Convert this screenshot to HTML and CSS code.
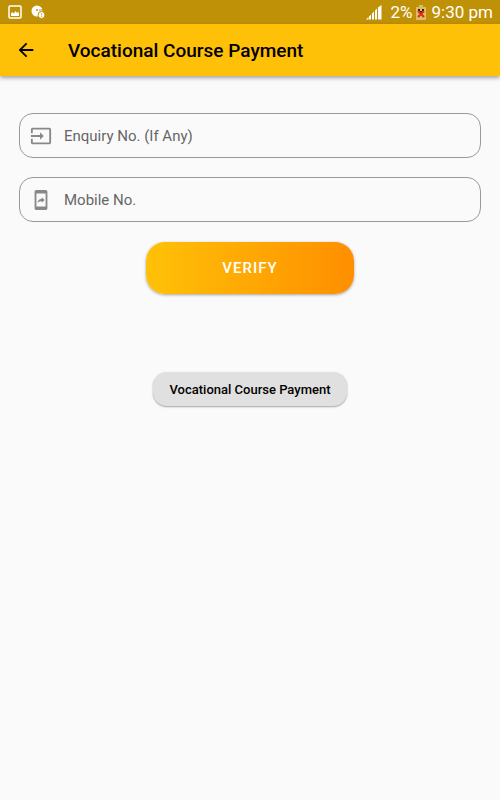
FILE: index.html
```html
<!DOCTYPE html>
<html lang="en">
<head>
    <meta charset="UTF-8">
    <meta name="viewport" content="width=device-width, initial-scale=1.0">
    <title>Vocational Course Payment</title>
    <link rel="stylesheet" href="styles.css">
</head>
<body>
    <div class="status-bar">
        <div class="status-left">
            <svg width="14" height="14" viewBox="0 0 14 14" aria-hidden="true">
                <rect x="1" y="1" width="12" height="12" rx="1" fill="none" stroke="#fff" stroke-width="1.5"/>
                <path d="M3 11V8.500l1.500-1.500 1.500 1.500L7.500 6l1.500 2 1-1.500L11 8.500V11z" fill="#fff"/>
            </svg>
            <svg width="14" height="14" viewBox="0 0 14 14" aria-hidden="true">
                <circle cx="6" cy="6" r="5.5" fill="#fff"/>
                <path d="M8 5h4" stroke="#bf9106" stroke-width="1"/>
                <circle cx="6" cy="5" r="1" fill="#bf9106"/>
                <circle cx="10.5" cy="10" r="3.5" fill="#fff" stroke="#bf9106" stroke-width="1"/>
                <path d="M10.5 8v2.5M10.5 11v1" stroke="#d9bd68" stroke-width="1"/>
            </svg>
        </div>
        <div class="status-right">
            <svg class="signal" width="16" height="16" viewBox="0 0 16 16" aria-hidden="true">
                <path d="M0 15.500L2.500 13v2.500zM3 15.500v-3l2-2v5zM6 15.500v-6l2-2v8zM9 15.500v-9l2-2v11zM12 15.500v-12L15.500 1v14.500z" fill="#fff"/>
            </svg>
            <span>2%</span>
            <svg class="battery" width="10" height="16" viewBox="0 0 10 16" aria-hidden="true">
                <path d="M3 1h4v2h3v13H0V3h3z" fill="#d9bd68"/>
                <path d="M2 5h2v2H2zM6 5h2v2H6zM4 7h2v2H4z" fill="#2a1a08"/>
                <path d="M2 7l6 6M8 7l-6 6" stroke="#e02a10" stroke-width="2"/>
            </svg>
            <span>9:30 pm</span>
        </div>
    </div>

    <header class="app-bar">
        <button class="back" type="button" aria-label="Back">
            <svg width="22" height="22" viewBox="0 0 24 24" aria-hidden="true">
                <path d="M20 11H7.83l5.59-5.59L12 4l-8 8 8 8 1.41-1.41L7.83 13H20v-2z"/>
            </svg>
        </button>
        <h1>Vocational Course Payment</h1>
    </header>

    <main>
        <form class="verify-form">
            <div class="field">
                <label for="enquiry" aria-label="Enquiry No.">
                    <svg width="22" height="22" viewBox="0 0 24 24" aria-hidden="true">
                        <path d="M21 3.01H3c-1.1 0-2 .9-2 2V9h2V4.99h18v14.03H3V15H1v4.01c0 1.1.9 1.98 2 1.98h18c1.1 0 2-.88 2-1.98v-14c0-1.11-.9-2-2-2zM11 16l4-4-4-4v3H1v2h10v3z"/>
                    </svg>
                </label>
                <input type="text" id="enquiry" placeholder="Enquiry No. (If Any)">
            </div>
            <div class="field">
                <label for="mobile" aria-label="Mobile No.">
                    <svg width="22" height="22" viewBox="0 0 24 24" aria-hidden="true">
                        <path d="M17 1H7c-1.1 0-2 .9-2 2v18c0 1.1.9 2 2 2h10c1.1 0 2-.9 2-2V3c0-1.1-.9-2-2-2zm0 18H7V5h10v14zm-4.2-5.76v1.75L16 12l-3.2-2.98v1.7c-3.11.43-4.35 2.56-4.8 4.7 1.11-1.5 2.58-2.18 4.8-2.18z"/>
                    </svg>
                </label>
                <input type="tel" id="mobile" placeholder="Mobile No.">
            </div>
            <button class="verify" type="button">VERIFY</button>
        </form>
        <button class="course" type="button">Vocational Course Payment</button>
    </main>
</body>
</html>
```
FILE: styles.css
```css
* {
    box-sizing: border-box;
}
body {
    margin: 0;
    font-family: Roboto, "Liberation Sans", sans-serif;
    background-color: #fafafa;
    color: #000;
}
button, input {
    font-family: inherit;
}
button {
    border: none;
    cursor: pointer;
}
svg {
    display: block;
}
.status-bar {
    display: flex;
    justify-content: space-between;
    align-items: center;
    height: 24px;
    padding: 0 7px 0 8px;
    background-color: #bf9106;
    color: #fff;
    font-size: 17px;
}
.status-left, .status-right {
    display: flex;
    align-items: center;
}
.status-left {
    gap: 9px;
}
.signal {
    margin-right: 9px;
}
.battery {
    margin: 0 6px 0 3px;
}
.app-bar {
    display: flex;
    align-items: center;
    height: 52px;
    padding: 0 15px;
    background-color: #ffc107;
    box-shadow: 0 2px 4px rgba(0, 0, 0, 0.35);
}
.back {
    padding: 0;
    margin-right: 31px;
    background: none;
}
h1 {
    margin: 0;
    font-size: 19px;
    font-weight: 500;
}
main {
    display: flex;
    flex-direction: column;
    align-items: center;
    padding: 37px 19px;
}
.verify-form {
    display: flex;
    flex-direction: column;
    align-items: center;
    gap: 19px;
    width: 100%;
}
.field {
    display: flex;
    align-items: center;
    width: 100%;
    height: 45px;
    padding: 0 10px;
    border: 1px solid #999;
    border-radius: 14px;
}
.field svg {
    fill: #888;
}
.field input {
    flex: 1;
    min-width: 0;
    margin-left: 12px;
    padding: 0;
    border: none;
    outline: none;
    background: none;
    font-size: 15px;
}
.field input::placeholder {
    color: #666;
    opacity: 1;
}
.verify {
    width: 45%;
    height: 52px;
    margin-top: 1px;
    border-radius: 19px;
    background: linear-gradient(to right, #ffc107, #ff8f00);
    box-shadow: 0 1px 3px rgba(0, 0, 0, 0.35);
    color: #fff;
    font-size: 15px;
    font-weight: 500;
    letter-spacing: 1px;
}
.course {
    height: 34px;
    margin-top: 78px;
    padding: 0 16px;
    border-radius: 14px;
    background-color: #e0e0e0;
    box-shadow: 0 1px 2px rgba(0, 0, 0, 0.35);
    color: #000;
    font-size: 13px;
    font-weight: 500;
}
```
